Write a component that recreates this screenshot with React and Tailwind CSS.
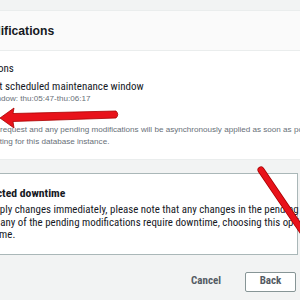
function Radio({ checked }) {
  return (
    <span className="w-[12px] h-[12px] shrink-0 rounded-full border border-[#687078] bg-white flex items-center justify-center">
      {checked ? <span className="w-[6px] h-[6px] rounded-full bg-[#0073bb]" /> : null}
    </span>
  );
}

export default function App() {
  return (
    <div className="relative w-[300px] h-[300px] overflow-hidden bg-[#f2f3f3] font-['Roboto_Condensed',sans-serif] text-[#16191f]">
      <div className="-ml-[128px] w-[426px] pt-[10px] flex flex-col">
        <section className="-mr-[14px] bg-white border border-[#eaeded]">
          <header className="h-[40px] bg-[#fafafa] border-b border-[#eaeded] px-[18px] flex items-center">
            <h2 className="font-['Liberation_Sans',sans-serif] text-[12.2px] leading-[16px] font-bold whitespace-nowrap">Scheduling of modifications</h2>
          </header>
          <div className="px-[18px] pt-[11px] pb-[12px] flex flex-col">
            <div className="text-[11px] leading-[14px] whitespace-nowrap mb-[4px]">When to apply modifications</div>
            <div className="flex flex-col gap-[7px]">
              <div className="flex gap-[8px]">
                <Radio checked />
                <div className="flex flex-col whitespace-nowrap">
                  <span className="text-[11px] leading-[13px]">Apply during the next scheduled maintenance window</span>
                  <span className="font-['Liberation_Sans',sans-serif] text-[8.1px] leading-[12px] text-[#687078]">Current maintenance window: thu:05:47-thu:06:17</span>
                </div>
              </div>
              <div className="flex gap-[8px]">
                <Radio />
                <div className="flex flex-col whitespace-nowrap">
                  <span className="text-[11px] leading-[12px]">Apply immediately</span>
                  <span className="font-['Liberation_Sans',sans-serif] text-[8.1px] leading-[11.5px] text-[#687078]">
                    The modifications in this request and any pending modifications will be asynchronously applied as soon as possible, regardless of the
                    <br />
                    maintenance window setting for this database instance.
                  </span>
                </div>
              </div>
            </div>
          </div>
        </section>

        <div className="mt-[13px] bg-white border border-[#aab7b8] pl-[12px] pt-[12px] pb-[12px] flex gap-[17px]">
          <svg width="16" height="16" viewBox="0 0 16 16" className="shrink-0">
            <path d="M8 1.5 L15 14.5 H1 Z" fill="none" stroke="#16191f" strokeWidth="1.6" strokeLinejoin="round" />
            <path d="M8 6 V10 M8 11.8 V12.4" stroke="#16191f" strokeWidth="1.6" strokeLinecap="round" />
          </svg>
          <div className="flex flex-col whitespace-nowrap">
            <span className="text-[11.7px] leading-[15px] font-bold">Potential unexpected downtime</span>
            <p className="mt-[3px] text-[10.9px] leading-[12.5px]">
              If you choose to apply changes immediately, please note that any changes in the pending modifications queue
              <br />
              are also applied. If any of the pending modifications require downtime, choosing this option can cause
              <br />
              unexpected downtime.
            </p>
          </div>
        </div>

        <div className="mt-[17px] flex justify-end items-center gap-[10px] pr-[2px]">
          <button className="h-[20px] px-[14px] text-[11px] font-bold text-[#545b64] font-['Roboto_Condensed',sans-serif]">Cancel</button>
          <button className="h-[20px] w-[51px] border border-[#879596] rounded-[2px] bg-white text-[11px] font-bold text-[#545b64] font-['Roboto_Condensed',sans-serif]">Back</button>
        </div>
      </div>

      <svg className="absolute inset-0 pointer-events-none" width="300" height="300" viewBox="0 0 300 300">
        <path d="M0 118 L14 108 L13 113.5 L116 111 Q119.5 114.5 116 118 L13 121.5 L14 128 Z" fill="#e8121a" stroke="#a80000" strokeWidth="0.8" strokeLinejoin="round" />
        <line x1="261" y1="170" x2="322" y2="260" stroke="#a80000" strokeWidth="7" strokeLinecap="round" />
        <line x1="261" y1="170" x2="322" y2="260" stroke="#e8121a" strokeWidth="5.5" strokeLinecap="round" />
      </svg>
    </div>
  );
}
